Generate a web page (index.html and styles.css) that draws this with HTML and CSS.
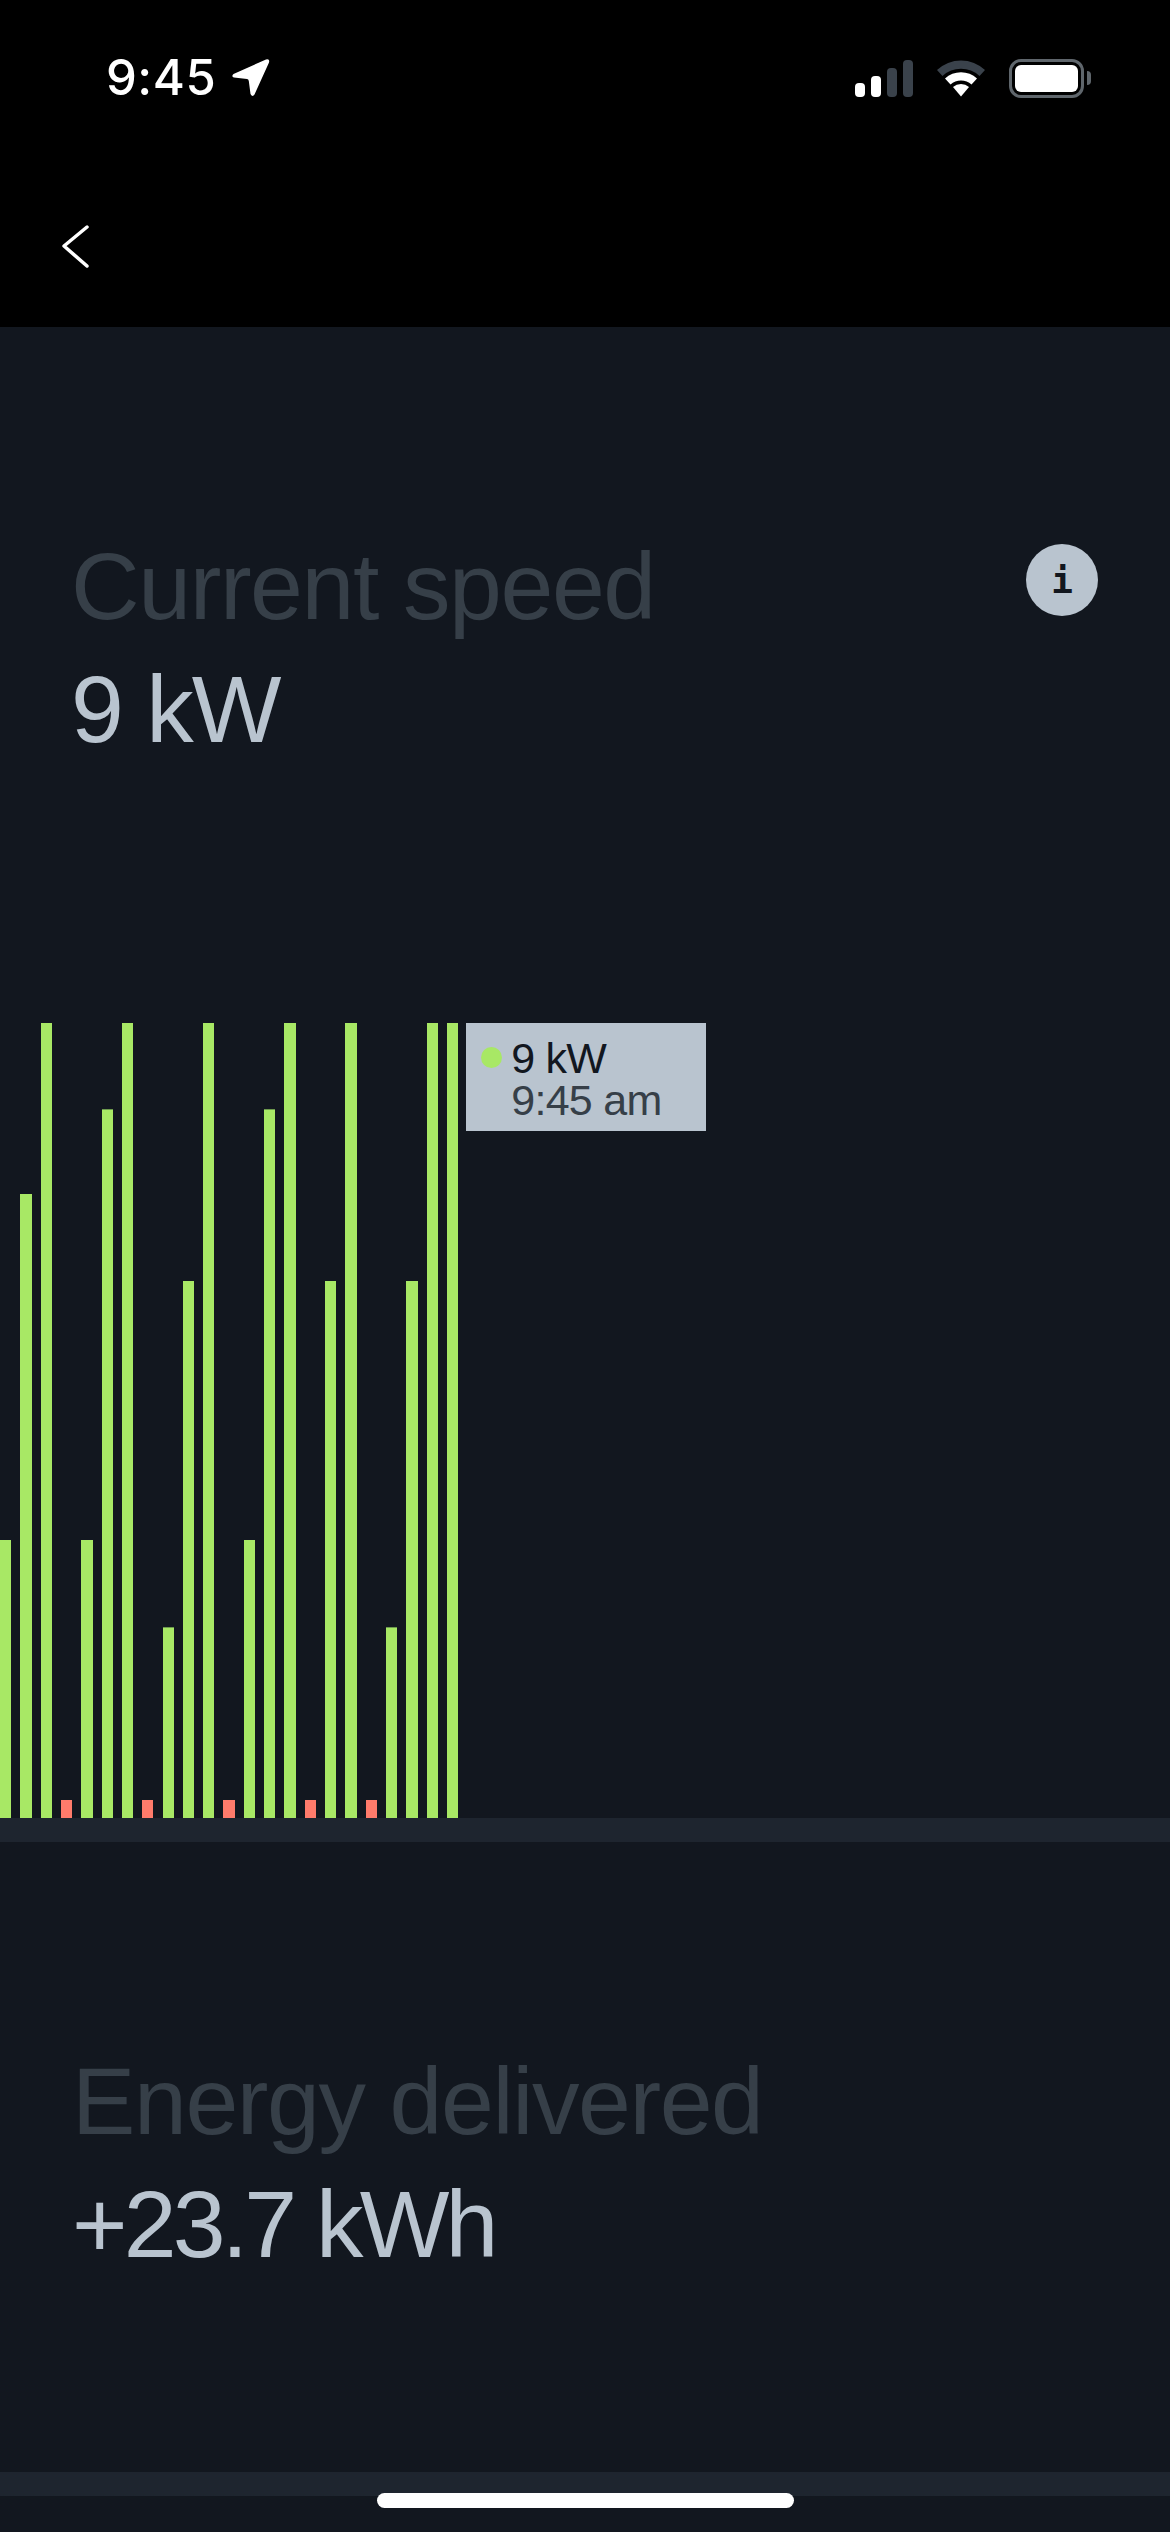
FILE: index.html
```html
<!DOCTYPE html>
<html lang="en">
<head>
    <meta charset="UTF-8">
    <meta name="viewport" content="width=device-width, initial-scale=1.0">
    <title>Charging</title>
    <link rel="stylesheet" href="styles.css">
</head>
<body>
    <div class="screen">
        <header class="top-bar">
            <div class="status-bar">
                <div class="status-left">
                    <span class="clock">9:45</span>
                    <svg class="location-icon" width="40" height="40" viewBox="0 0 40 40">
                        <path d="M35 1.5 L2.5 16 Q0 18.5 3 19.5 L16 21 Q17.5 21.2 17.8 23 L19.5 36 Q21.5 39.5 23.5 36.5 L38 4.5 Q39 0.5 35 1.5 Z" fill="#fff"/>
                    </svg>
                </div>
                <div class="status-right">
                    <div class="signal">
                        <span class="signal-bar on bar-1"></span>
                        <span class="signal-bar on bar-2"></span>
                        <span class="signal-bar bar-3"></span>
                        <span class="signal-bar bar-4"></span>
                    </div>
                    <svg class="wifi-icon" width="50" height="38" viewBox="0 0 50 38">
                        <path d="M1 11 A35 35 0 0 1 49 11 L43.5 17 A27 27 0 0 0 6.5 17 Z" fill="#3a424b"/>
                        <path d="M9 19.5 A23.5 23.5 0 0 1 41 19.5 L35.5 25.5 A15.5 15.5 0 0 0 14.5 25.5 Z" fill="#fff"/>
                        <path d="M17 28 A12 12 0 0 1 33 28 L25 37.5 Z" fill="#fff"/>
                    </svg>
                    <div class="battery">
                        <div class="battery-body"><div class="battery-fill"></div></div>
                        <div class="battery-cap"></div>
                    </div>
                </div>
            </div>
            <nav class="nav-row">
                <svg class="back-icon" width="30" height="46" viewBox="0 0 30 46">
                    <path d="M26 4 L3 23 L26 43" fill="none" stroke="#fff" stroke-width="3.5" stroke-linecap="round" stroke-linejoin="round"/>
                </svg>
            </nav>
        </header>

        <main class="content">
            <section class="speed-section">
                <div class="stat">
                    <div class="stat-label">Current speed</div>
                    <div class="stat-value">9 kW</div>
                </div>
                <button class="info-button">i</button>
            </section>

            <section class="chart">
                <div class="bars">
                    <div class="bar level-c"></div>
                    <div class="bar level-b"></div>
                    <div class="bar level-a"></div>
                    <div class="bar low"></div>
                    <div class="bar level-c"></div>
                    <div class="bar level-a2"></div>
                    <div class="bar level-a"></div>
                    <div class="bar low"></div>
                    <div class="bar level-d"></div>
                    <div class="bar level-b2"></div>
                    <div class="bar level-a"></div>
                    <div class="bar low"></div>
                    <div class="bar level-c"></div>
                    <div class="bar level-a2"></div>
                    <div class="bar level-a"></div>
                    <div class="bar low"></div>
                    <div class="bar level-b2"></div>
                    <div class="bar level-a"></div>
                    <div class="bar low"></div>
                    <div class="bar level-d"></div>
                    <div class="bar level-b2"></div>
                    <div class="bar level-a"></div>
                    <div class="bar level-a"></div>
                </div>
                <div class="chart-tooltip">
                    <span class="tooltip-dot"></span>
                    <div class="tooltip-text">
                        <div class="tooltip-value">9 kW</div>
                        <div class="tooltip-time">9:45 am</div>
                    </div>
                </div>
            </section>
            <div class="divider"></div>

            <section class="energy-section">
                <div class="stat">
                    <div class="stat-label">Energy delivered</div>
                    <div class="stat-value tight">+23.7 kWh</div>
                </div>
            </section>
            <div class="divider"></div>
        </main>

        <div class="home-indicator"></div>
    </div>
</body>
</html>
```

FILE: styles.css
```css
body, html {
    margin: 0;
    background-color: #12171f;
    font-family: 'Liberation Sans', sans-serif;
}
.screen {
    position: relative;
    width: 1170px;
    height: 2532px;
    overflow: hidden;
    display: flex;
    flex-direction: column;
}
.top-bar {
    height: 327px;
    background-color: #000;
}
.status-bar {
    display: flex;
    justify-content: space-between;
    align-items: center;
    height: 40px;
    padding: 58px 79px 0 106px;
}
.status-left {
    display: flex;
    align-items: center;
    gap: 15px;
}
.clock {
    color: #fff;
    font-family: 'Inter', sans-serif;
    font-size: 49px;
    font-weight: 500;
    line-height: 40px;
    letter-spacing: 0.5px;
}
.status-right {
    display: flex;
    align-items: center;
    gap: 23px;
}
.signal {
    display: flex;
    align-items: flex-end;
    gap: 6px;
    height: 37px;
}
.signal-bar {
    width: 10px;
    border-radius: 4px;
    background-color: #3a424b;
}
.signal-bar.on {
    background-color: #fff;
}
.bar-1 { height: 14px; }
.bar-2 { height: 21px; }
.bar-3 { height: 29px; }
.bar-4 { height: 37px; }
.battery {
    display: flex;
    align-items: center;
    gap: 3px;
}
.battery-body {
    width: 75px;
    height: 39px;
    box-sizing: border-box;
    border: 3px solid #5f666c;
    border-radius: 12px;
    padding: 3px;
}
.battery-fill {
    height: 100%;
    background-color: #fff;
    border-radius: 6px;
}
.battery-cap {
    width: 4px;
    height: 14px;
    background-color: #5f666c;
    border-radius: 0 7px 7px 0;
}
.nav-row {
    padding: 125px 0 0 61px;
}
.back-icon {
    display: block;
}
.content {
    flex: 1;
    background-color: #12171f;
}
.speed-section {
    display: flex;
    justify-content: space-between;
    align-items: flex-start;
    height: 696px;
    padding: 0 72px 0 71px;
    box-sizing: border-box;
}
.stat {
    padding-top: 198px;
}
.stat-label {
    color: #363f48;
    font-size: 95px;
    line-height: 123px;
    letter-spacing: -1.4px;
}
.stat-value {
    color: #b9c4cf;
    font-size: 95px;
    line-height: 123px;
    letter-spacing: -2px;
}
.stat-value.tight {
    letter-spacing: -3.8px;
}
.info-button {
    width: 72px;
    height: 72px;
    margin-top: 217px;
    padding: 0;
    border: none;
    border-radius: 50%;
    background-color: #b9c4cf;
    color: #12171f;
    font-family: 'DejaVu Sans Mono', monospace;
    font-size: 36px;
    font-weight: bold;
}
.chart {
    display: flex;
    height: 795px;
}
.bars {
    display: flex;
    align-items: flex-end;
    gap: 9.03px;
}
.bar {
    width: 11.3px;
    background-color: #a8e865;
}
.bar.low {
    height: 18px;
    background-color: #ff7b6b;
}
.level-a { height: 795px; }
.level-a2 { height: 709px; border-top: 1px solid #6d9a4e; box-sizing: border-box; }
.level-b { height: 624px; }
.level-b2 { height: 537px; }
.level-c { height: 278px; }
.level-d { height: 191px; border-top: 1px solid #6d9a4e; box-sizing: border-box; }
.chart-tooltip {
    display: flex;
    align-items: flex-start;
    gap: 9px;
    box-sizing: border-box;
    width: 240px;
    height: 108px;
    margin-left: 8px;
    padding: 14px 0 0 15px;
    background-color: #b9c4cf;
}
.tooltip-dot {
    width: 21px;
    height: 21px;
    margin-top: 10px;
    border-radius: 50%;
    background-color: #a8e865;
}
.tooltip-value {
    color: #12171f;
    font-size: 43px;
    line-height: 42px;
    letter-spacing: -0.8px;
}
.tooltip-time {
    color: #363f48;
    font-size: 43px;
    line-height: 42px;
    letter-spacing: -0.7px;
}
.divider {
    height: 24px;
    background-color: #1e252f;
}
.energy-section {
    height: 630px;
    padding: 0 72px;
    box-sizing: border-box;
}
.home-indicator {
    position: absolute;
    left: 377px;
    bottom: 24px;
    width: 417px;
    height: 15px;
    border-radius: 8px;
    background-color: #fff;
}
```
